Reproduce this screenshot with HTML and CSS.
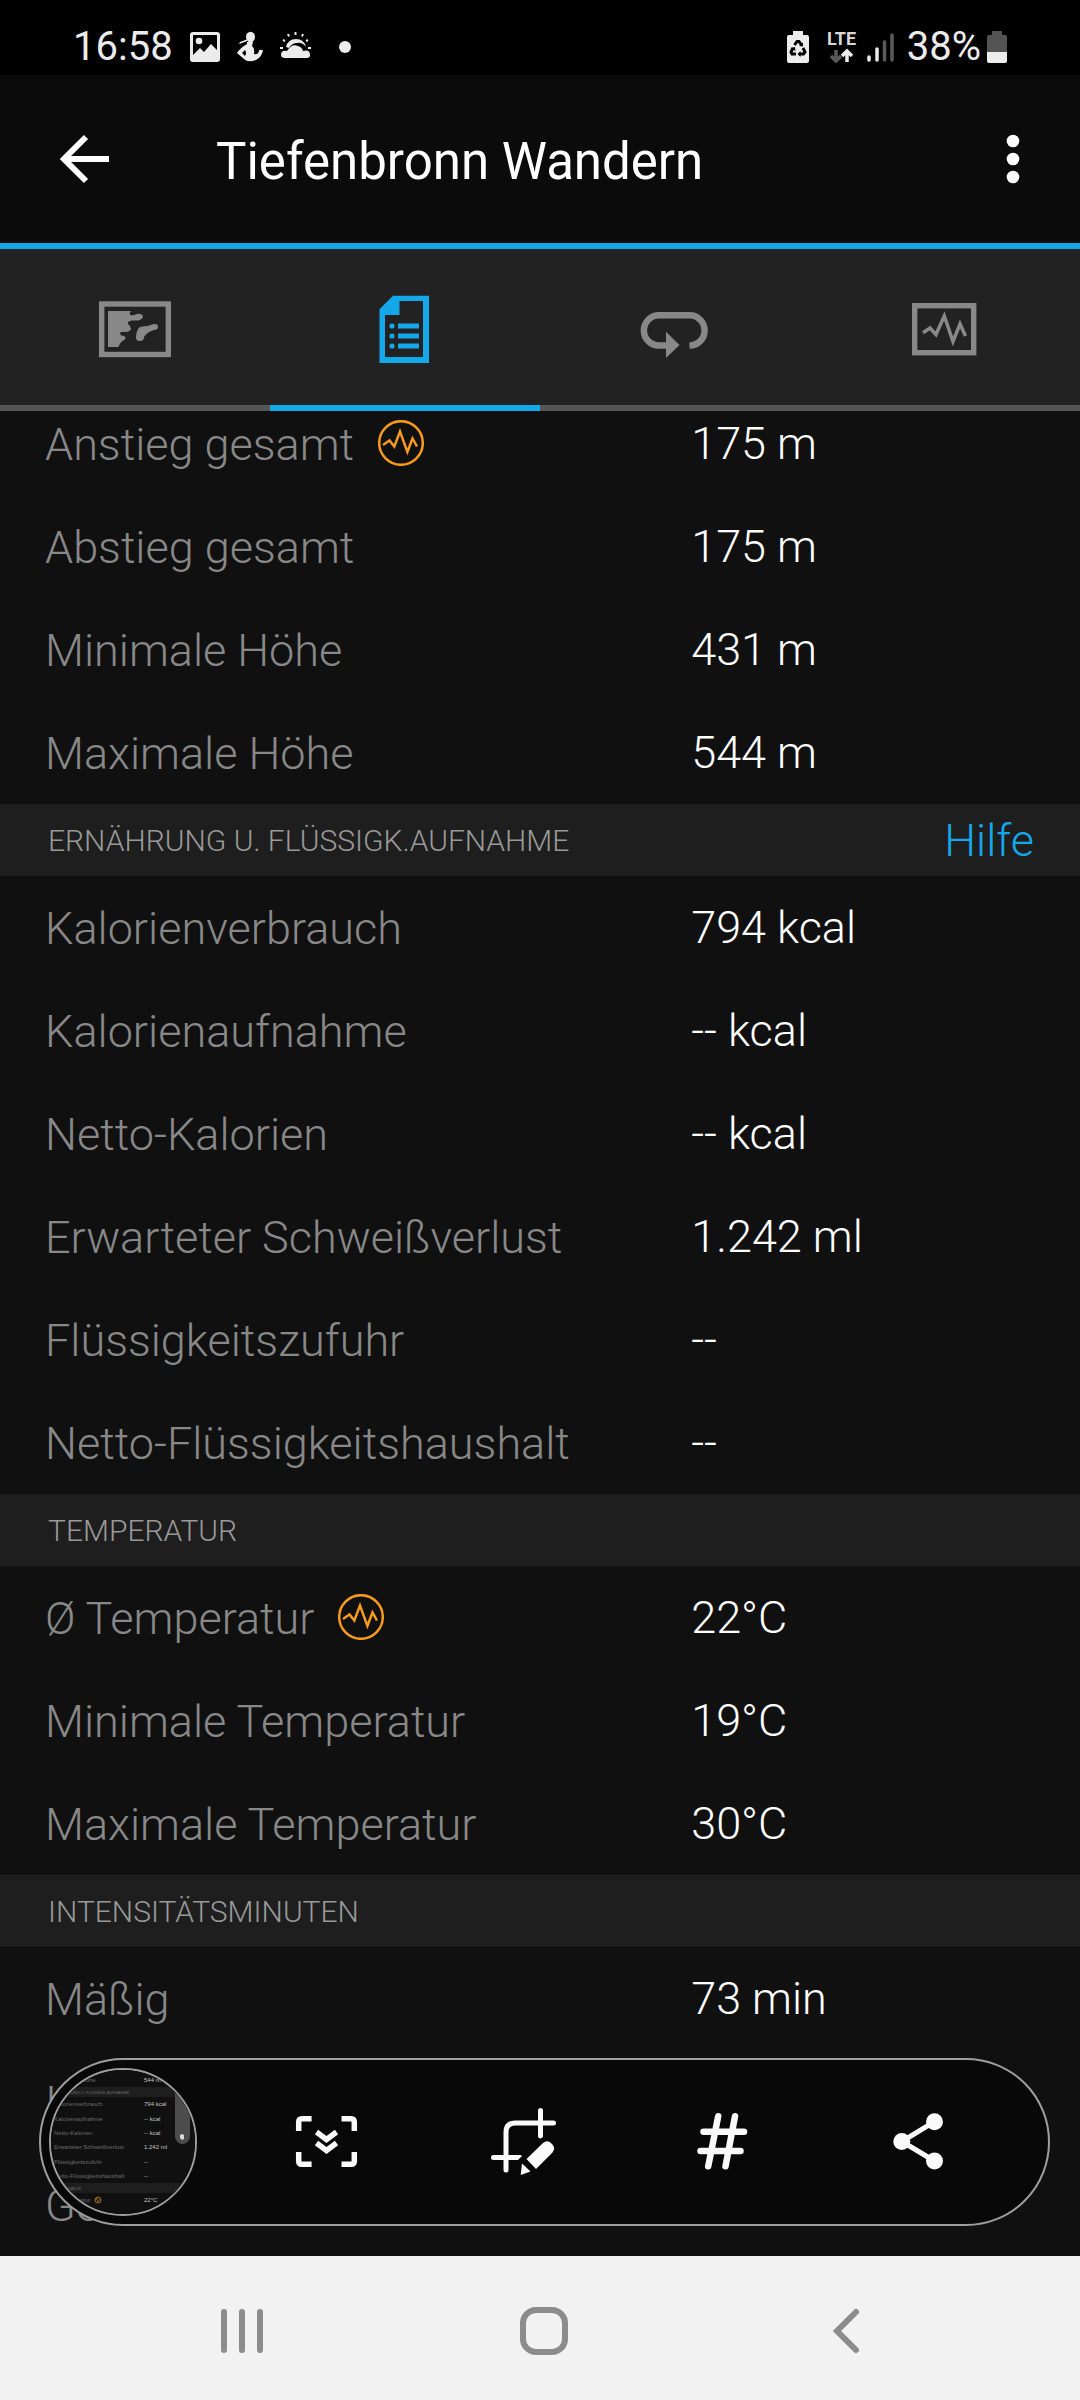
FILE: index.html
```html
<!DOCTYPE html>
<html lang="de">
<head>
    <meta charset="UTF-8">
    <meta name="viewport" content="width=device-width, initial-scale=1.0">
    <title>Tiefenbronn Wandern</title>
    <link rel="stylesheet" href="styles.css">
</head>
<body>
    <!-- Status bar -->
    <div class="status-bar">
        <div class="status-left">
            <span class="status-text">16:58</span>
            <svg width="30" height="32" viewBox="0 0 30 32" fill="#ececec">
                <path fill-rule="evenodd" d="M3 1H27Q30 1 30 4V28Q30 31 27 31H3Q0 31 0 28V4Q0 1 3 1ZM3 4V24L10 17L14 21L21 13L27 19V4Z"/>
                <circle cx="9" cy="10" r="3.3"/>
            </svg>
            <svg width="26" height="32" viewBox="0 0 26 32">
                <ellipse cx="13.5" cy="6" rx="4.5" ry="5.2" fill="#ececec"/>
                <path d="M11 8L3 11L2 13L5 12L10 10Z" fill="#ececec"/>
                <path d="M10 11H16L15 15Q18 17 17 23Q22 24 22 19H26Q25 26 19 29Q11 32 7 28L0 22Q3 17 10 13ZM8 19L5 22L8 25Q10 22 8 19Z" fill="#ececec" fill-rule="evenodd"/>
            </svg>
            <svg width="32" height="32" viewBox="0 0 32 32">
                <path d="M6 16Q8 8 16 8Q24 8 26 16Q22 11 17 12Q12 12 9 17Z" fill="#ececec"/>
                <path d="M5 27Q1 27 1 24Q1 19 7 20Q12 12 18 15Q22 16 23 20Q30 18 30 24Q30 27 27 27Z" fill="#ececec"/>
                <path d="M15.500 1V4M8 3L9 5.500M23 3L22 5.500M3 9L5 10M28 9L26 10M0 17H3M28 17H31" stroke="#ececec" stroke-width="2" fill="none"/>
            </svg>
            <svg class="status-dot" width="12" height="12" viewBox="0 0 12 12"><circle cx="6" cy="6" r="6" fill="#ececec"/></svg>
        </div>
        <div class="status-right">
            <svg width="22" height="32" viewBox="0 0 22 32">
                <path d="M6 0H16V4H20Q22 4 22 6V30Q22 32 20 32H2Q0 32 0 30V6Q0 4 2 4H6Z" fill="#ececec"/>
                <path d="M7.500 14L10 10.500H12L14.500 14M16 17L18 21L16.500 23H12.500M9 23H5L4 21L6 17" fill="none" stroke="#000" stroke-width="3"/>
                <path d="M12 15L16 15.500L16 11.500ZM13.500 20V26L10.500 23ZM3.500 17L8 16L8.500 20Z" fill="#000"/>
            </svg>
            <svg class="lte" width="30" height="34" viewBox="0 0 30 34">
                <text class="lte-text" x="0" y="15">LTE</text>
                <path d="M9 20V28M4 26L9 31L14 26" fill="none" stroke="#5a5a5a" stroke-width="3.500"/>
                <path d="M20 32V22M15 26L20 21L25 26" fill="none" stroke="#ececec" stroke-width="3.500"/>
            </svg>
            <svg class="signal" width="28" height="32" viewBox="0 0 28 32" fill="none" stroke-width="3.500" stroke-linecap="round">
                <path d="M2 26V29M10 18V29" stroke="#ececec"/>
                <path d="M17.500 11V29M25 4V29" stroke="#5a5a5a"/>
            </svg>
            <span class="status-text battery-text">38%</span>
            <svg width="20" height="32" viewBox="0 0 20 32">
                <path d="M5 0H15V4H18Q20 4 20 6V21H0V6Q0 4 2 4H5Z" fill="#545454"/>
                <path d="M0 21H20V30Q20 32 18 32H2Q0 32 0 30Z" fill="#ececec"/>
            </svg>
        </div>
    </div>

    <!-- App bar -->
    <header class="app-bar">
        <button class="icon-btn" aria-label="Zurück">
            <svg width="50" height="50" viewBox="0 0 50 50" fill="none" stroke="#fff" stroke-width="6">
                <path d="M49 25H6M26 3L4 25L26 47"/>
            </svg>
        </button>
        <h1 class="app-title">Tiefenbronn Wandern</h1>
        <button class="icon-btn" aria-label="Mehr Optionen">
            <svg width="14" height="50" viewBox="0 0 14 50" fill="#fff">
                <circle cx="7" cy="7" r="6.300"/><circle cx="7" cy="25" r="6.300"/><circle cx="7" cy="43" r="6.300"/>
            </svg>
        </button>
    </header>

    <!-- Tabs -->
    <nav class="tabs">
        <button class="tab" aria-label="Karte">
            <svg width="72" height="72" viewBox="0 0 72 72">
                <rect x="2.700" y="11" width="66.600" height="50.500" fill="none" stroke="currentColor" stroke-width="5.400"/>
                <path d="M9 18H32Q30 20 31 22Q34 23 38 21Q43 20 44 23.500Q44 26 39 27.500H33Q28 28 29 31Q32 33 32 36Q31 39 26 39Q21 38 21 41Q22 43 25 43Q28 45 25 47Q21 49 19.500 54H9Z" fill="currentColor"/>
                <path d="M37 45Q37 37 41 34Q45 33 49 33Q53 31 56 31Q59 31 59 34Q59 37 55 37Q48 39 45 44Q45 48 41 48Q37 48 37 45Z" fill="currentColor"/>
            </svg>
        </button>
        <button class="tab tab-active" aria-label="Details">
            <svg width="72" height="72" viewBox="0 0 72 72" fill="currentColor">
                <path fill-rule="evenodd" d="M24 2.700H60V70H10.500V16.300ZM30.500 8V22H16V64H54V8Z"/>
                <circle cx="23" cy="33" r="2.600"/><circle cx="23" cy="43" r="2.600"/><circle cx="23" cy="53" r="2.600"/>
                <path d="M29 30.600H50V35.400H29ZM29 40.600H50V45.400H29ZM29 50.600H50V55.400H29Z"/>
            </svg>
        </button>
        <button class="tab" aria-label="Runden">
            <svg width="72" height="72" viewBox="0 0 72 72">
                <path d="M50.500 52.500A15.100 15.100 0 0 0 50.500 22.300H20A15.100 15.100 0 0 0 20 52.500H29" fill="none" stroke="currentColor" stroke-width="6.500"/>
                <path d="M27 38.700L40.500 52L27 65Z" fill="currentColor"/>
            </svg>
        </button>
        <button class="tab" aria-label="Diagramme">
            <svg width="72" height="72" viewBox="0 0 72 72" fill="none" stroke="currentColor">
                <rect x="5.700" y="12.700" width="59" height="47" stroke-width="5.400"/>
                <path d="M14 39.700L21 35L27 41.500L35.300 23L44 48.500L51 31L56.500 43" stroke-width="3.500"/>
            </svg>
        </button>
    </nav>

    <!-- Activity details, scrolled to the end -->
    <main class="details">
        <table class="stats">
            <tr>
                <th scope="row"><span class="label">Anstieg gesamt
                    <svg class="chart-badge" width="46" height="46" viewBox="0 0 46 46"><circle cx="23" cy="23" r="21.800"/><path d="M5 25L11.500 20.500L16.300 26.500L22 11.500L29.400 32L34.500 18.500L39 26.500"/></svg>
                </span></th>
                <td>175 m</td>
            </tr>
            <tr><th scope="row">Abstieg gesamt</th><td>175 m</td></tr>
            <tr><th scope="row">Minimale Höhe</th><td>431 m</td></tr>
            <tr><th scope="row">Maximale Höhe</th><td>544 m</td></tr>
        </table>

        <div class="section-bar">
            <h2>ERNÄHRUNG U. FLÜSSIGK.AUFNAHME</h2>
            <a href="#" class="help-link">Hilfe</a>
        </div>
        <table class="stats">
            <tr><th scope="row">Kalorienverbrauch</th><td>794 kcal</td></tr>
            <tr><th scope="row">Kalorienaufnahme</th><td>-- kcal</td></tr>
            <tr><th scope="row">Netto-Kalorien</th><td>-- kcal</td></tr>
            <tr><th scope="row">Erwarteter Schweißverlust</th><td>1.242 ml</td></tr>
            <tr><th scope="row">Flüssigkeitszufuhr</th><td>--</td></tr>
            <tr><th scope="row">Netto-Flüssigkeitshaushalt</th><td>--</td></tr>
        </table>

        <div class="section-bar">
            <h2>TEMPERATUR</h2>
        </div>
        <table class="stats">
            <tr>
                <th scope="row"><span class="label">Ø Temperatur
                    <svg class="chart-badge" width="46" height="46" viewBox="0 0 46 46"><circle cx="23" cy="23" r="21.800"/><path d="M5 25L11.500 20.500L16.300 26.500L22 11.500L29.400 32L34.500 18.500L39 26.500"/></svg>
                </span></th>
                <td>22°C</td>
            </tr>
            <tr><th scope="row">Minimale Temperatur</th><td>19°C</td></tr>
            <tr><th scope="row">Maximale Temperatur</th><td>30°C</td></tr>
        </table>

        <div class="section-bar">
            <h2>INTENSITÄTSMINUTEN</h2>
        </div>
        <table class="stats">
            <tr><th scope="row">Mäßig</th><td>73 min</td></tr>
            <tr><th scope="row">Intensiv</th><td></td></tr>
            <tr><th scope="row">Gesamt</th><td></td></tr>
        </table>

        <!-- Screenshot toolbar floating over the list -->
        <div class="capture-bar">
            <button class="thumb" aria-label="Vorschau">
                <svg width="144" height="144" viewBox="2 2 144 144">
                    <rect width="148" height="148" fill="#101010"/>
                    <rect y="19" width="148" height="10" fill="#1e1e1e"/>
                    <rect y="115" width="148" height="10" fill="#1e1e1e"/>
                    <g class="thumb-label">
                        <text x="5" y="14">Maximale Höhe</text>
                        <text class="thumb-head" x="5" y="26">ERNÄHRUNG U. FLÜSSIGK.AUFNAHME</text>
                        <text x="5" y="38">Kalorienverbrauch</text>
                        <text x="5" y="53">Kalorienaufnahme</text>
                        <text x="5" y="67">Netto-Kalorien</text>
                        <text x="5" y="81">Erwarteter Schweißverlust</text>
                        <text x="5" y="96">Flüssigkeitszufuhr</text>
                        <text x="5" y="110">Netto-Flüssigkeitshaushalt</text>
                        <text class="thumb-head" x="5" y="122">TEMPERATUR</text>
                        <text x="5" y="134">Ø Temperatur</text>
                    </g>
                    <g class="thumb-value">
                        <text x="95" y="14">544 m</text>
                        <text x="95" y="38">794 kcal</text>
                        <text x="95" y="53">-- kcal</text>
                        <text x="95" y="67">-- kcal</text>
                        <text x="95" y="81">1.242 ml</text>
                        <text x="95" y="96">--</text>
                        <text x="95" y="110">--</text>
                        <text x="95" y="134">22°C</text>
                    </g>
                    <circle cx="49" cy="132" r="3" fill="none" stroke="#a86c14"/>
                    <path d="M46.500 132L48 130L49 134L51 131" fill="none" stroke="#a86c14" stroke-width=".8"/>
                    <rect x="126" y="0" width="15" height="76" rx="7.500" fill="#4c4c4c"/>
                    <path d="M131 67L133 66L135 67V71L133 72L131 70Z" fill="#d8d8d8"/>
                </svg>
            </button>
            <div class="capture-actions">
                <button class="capture-btn" aria-label="Scrollaufnahme">
                    <svg width="72" height="72" viewBox="0 0 72 72" fill="none" stroke="#fafafa" stroke-width="5.500">
                        <path d="M21.600 12.700H12Q8.700 12.700 8.700 16V25M51.500 12.700H61Q64.300 12.700 64.300 16V25M8.700 46V55Q8.700 58.300 12 58.300H21.600M64.300 46V55Q64.300 58.300 61 58.300H51.500"/>
                        <path d="M26.500 26L36.500 33.500L46.500 26M26.500 37L36.500 44.500L46.500 37"/>
                    </svg>
                </button>
                <button class="capture-btn" aria-label="Zuschneiden">
                    <svg width="72" height="72" viewBox="0 0 72 72">
                        <path d="M19 64V26Q19 17 28 17H66.500M53.500 4.500V30M6.500 51.500H33" fill="none" stroke="#fafafa" stroke-width="5" stroke-linecap="round"/>
                        <path d="M49 38L60 27V36Z" fill="#080808"/>
                        <path d="M28 57L40 45V57Z" fill="#080808"/>
                        <path d="M39.500 53L56 37Q61 33 65 38Q69 42 65.500 46.500L49 63Z" fill="#fafafa"/>
                        <path d="M35 57.500L43.500 65.500L33.700 69Z" fill="#fafafa"/>
                    </svg>
                </button>
                <button class="capture-btn" aria-label="Hashtag hinzufügen">
                    <svg width="72" height="72" viewBox="0 0 72 72" fill="none" stroke="#fafafa" stroke-width="6.500" stroke-linecap="round">
                        <path d="M19.500 25.700H60M16.500 45H56.500M34.200 10.300L24.200 60.300M51 10.300L41.500 60.300"/>
                    </svg>
                </button>
                <button class="capture-btn" aria-label="Teilen">
                    <svg width="72" height="72" viewBox="0 0 72 72" fill="#fafafa">
                        <path d="M53.500 15.700L20.800 35.500L53.500 55" fill="none" stroke="#fafafa" stroke-width="5"/>
                        <circle cx="20.800" cy="35.500" r="8.500"/><circle cx="53.500" cy="15.700" r="8.500"/><circle cx="53.500" cy="55" r="8.500"/>
                    </svg>
                </button>
            </div>
        </div>
    </main>

    <!-- System navigation -->
    <nav class="system-nav">
        <button class="nav-btn" aria-label="Letzte Apps">
            <svg width="48" height="48" viewBox="0 0 48 48" fill="none" stroke="#8c8c8c" stroke-width="6" stroke-linecap="round"><path d="M6 5V43M24 5V43M42 5V43"/></svg>
        </button>
        <button class="nav-btn" aria-label="Startbildschirm">
            <svg width="48" height="48" viewBox="0 0 48 48" fill="none" stroke="#8c8c8c" stroke-width="6"><rect x="3" y="3" width="42" height="42" rx="13"/></svg>
        </button>
        <button class="nav-btn" aria-label="Zurück">
            <svg width="48" height="48" viewBox="0 0 48 48" fill="none" stroke="#8c8c8c" stroke-width="6" stroke-linecap="round"><path d="M34 5L15 24L34 43"/></svg>
        </button>
    </nav>
</body>
</html>
```

FILE: styles.css
```css
* {
    box-sizing: border-box;
}
body {
    font-family: Roboto, "Liberation Sans", sans-serif;
    background-color: #101010;
    color: #fff;
    display: flex;
    flex-direction: column;
    height: 100vh;
    margin: 0;
}
button {
    background: none;
    border: none;
    padding: 0;
    color: inherit;
    cursor: pointer;
}
svg {
    display: block;
    flex: none;
}

/* Status bar */
.status-bar {
    display: flex;
    justify-content: space-between;
    height: 75px;
    padding: 18px 73px 0 73px;
    background-color: #000;
    color: #ececec;
}
.status-left,
.status-right {
    display: flex;
    align-items: center;
    gap: 17px;
}
.status-text {
    font-size: 40px;
    line-height: 48px;
}
.status-dot {
    margin-left: 10px;
}
.status-right {
    gap: 6px;
}
.lte {
    margin-left: 12px;
    overflow: visible;
}
.lte-text {
    font-size: 18px;
    font-weight: 700;
    fill: #d8d8d8;
}
.signal {
    margin-left: 4px;
}
.battery-text {
    margin-left: 6px;
}

/* App bar */
.app-bar {
    display: flex;
    align-items: center;
    height: 174px;
    padding: 0 60px;
    background-color: #0b0b0b;
    border-bottom: 6px solid #14a7ea;
}
.icon-btn {
    flex: none;
}
.app-title {
    flex: 1;
    margin: 0;
    padding: 6px 0 0 106px;
    font-size: 51px;
    font-weight: 400;
    line-height: 60px;
}

/* Tabs */
.tabs {
    display: flex;
    height: 162px;
    background-color: #222;
}
.tab {
    flex: 1;
    display: flex;
    align-items: center;
    justify-content: center;
    padding-top: 4px;
    border-bottom: 6px solid #555;
    color: #888;
}
.tab-active {
    color: #14a7ea;
    border-bottom-color: #14a7ea;
}

/* Details list */
.details {
    flex: 1;
    min-height: 0;
    display: flex;
    flex-direction: column;
    justify-content: flex-end;
    position: relative;
    overflow: hidden;
}
.stats {
    width: 100%;
    flex: none;
    table-layout: fixed;
    border-collapse: collapse;
    font-size: 45px;
    line-height: 54px;
}
.stats tr {
    height: 103px;
}
.stats th {
    width: 64%;
    padding: 3px 0 0 45px;
    color: #888;
    font-weight: 300;
    text-align: left;
}
.stats td {
    padding: 1px 46px 0 0;
    font-weight: 300;
}
.label {
    display: flex;
    align-items: center;
    gap: 24px;
}
.chart-badge {
    margin-bottom: 4px;
    fill: none;
    stroke: #f79a1c;
    stroke-width: 2.5px;
}
.section-bar {
    flex: none;
    display: flex;
    align-items: center;
    justify-content: space-between;
    height: 72px;
    padding: 0 46px 0 48px;
    background-color: #1e1e1e;
}
.section-bar h2 {
    margin: 0;
    color: #999;
    font-size: 30px;
    font-weight: 300;
}
.help-link {
    color: #14a7ea;
    font-size: 45px;
    font-weight: 300;
    text-decoration: none;
}

/* Screenshot toolbar */
.capture-bar {
    position: absolute;
    left: 39px;
    right: 30px;
    bottom: 30px;
    height: 168px;
    display: flex;
    align-items: center;
    padding: 0 8px;
    background-color: #080808;
    border: 2px solid #9e9e9e;
    border-radius: 84px;
}
.thumb {
    flex: none;
    width: 148px;
    height: 148px;
    border: 2px solid #9e9e9e;
    border-radius: 50%;
    overflow: hidden;
}
.thumb-label {
    font-size: 6px;
    fill: #6c6c6c;
}
.thumb-head {
    font-size: 4px;
}
.thumb-value {
    font-size: 6px;
    fill: #c4c4c4;
}
.capture-actions {
    flex: 1;
    display: flex;
    margin: 0 25px 0 30px;
}
.capture-btn {
    flex: 1;
    display: flex;
    justify-content: center;
}

/* System navigation */
.system-nav {
    display: flex;
    height: 144px;
    padding: 6px 83px 0 91px;
    background-color: #f2f2f2;
}
.nav-btn {
    flex: 1;
    display: flex;
    align-items: center;
    justify-content: center;
}
```
